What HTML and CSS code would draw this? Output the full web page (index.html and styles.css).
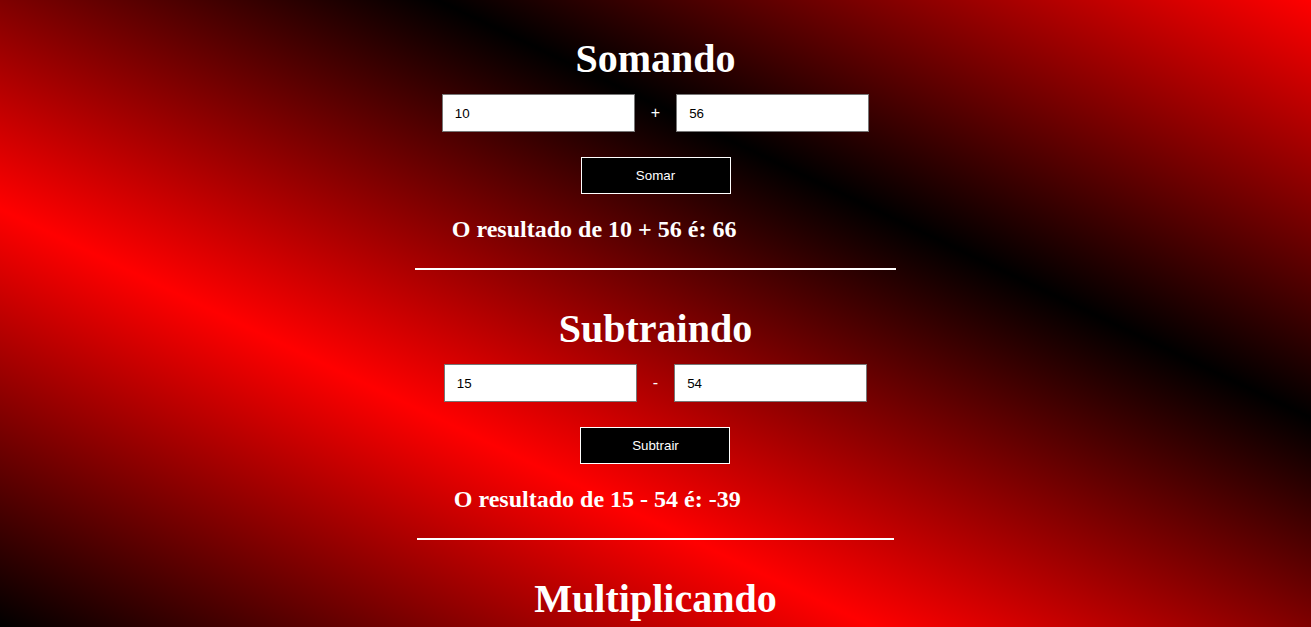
FILE: index.html
```html
<!DOCTYPE html>
<html lang="pt-BR">
<head>
<meta charset="utf-8">
<title>Calculadora</title>
<link rel="stylesheet" href="styles.css">
</head>
<body>
  <section class="calc">
    <h1 class="calc-title">Somando</h1>
    <div class="calc-row">
      <input class="calc-input" type="text" value="10">
      <span class="calc-op">+</span>
      <input class="calc-input" type="text" value="56">
    </div>
    <button class="calc-btn" type="button">Somar</button>
    <h2 class="calc-result">O resultado de 10 + 56 é: 66</h2>
    <hr class="calc-rule">
  </section>

  <section class="calc">
    <h1 class="calc-title">Subtraindo</h1>
    <div class="calc-row">
      <input class="calc-input" type="text" value="15">
      <span class="calc-op">-</span>
      <input class="calc-input" type="text" value="54">
    </div>
    <button class="calc-btn" type="button">Subtrair</button>
    <h2 class="calc-result">O resultado de 15 - 54 é: -39</h2>
    <hr class="calc-rule">
  </section>

  <section class="calc">
    <h1 class="calc-title">Multiplicando</h1>
    <div class="calc-row">
      <input class="calc-input" type="text">
      <span class="calc-op">*</span>
      <input class="calc-input" type="text">
    </div>
    <button class="calc-btn" type="button">Multiplicar</button>
    <hr class="calc-rule">
  </section>
</body>
</html>
```

FILE: styles.css
```css
html {
  margin: 0;
  padding: 0;
}

body {
  margin: 8px;
  font-family: "Liberation Serif", "Times New Roman", serif;
  color: #fff;
  background: linear-gradient(to top right, #000000, #ff0000, #000000, #ff0000) fixed;
}

.calc {
  width: fit-content;
  margin: 0 auto 8px;
  padding: 0 27px;
  display: flex;
  flex-direction: column;
  align-items: center;
}

.calc-title {
  margin: 28px 0 0;
  font-size: 40px;
  line-height: 46px;
  font-weight: bold;
  text-align: center;
}

.calc-row {
  display: flex;
  align-items: center;
  margin-top: 12px;
}

.calc-input {
  box-sizing: border-box;
  width: 193px;
  height: 38px;
  margin: 0;
  padding: 0 11px 0 12px;
  border: 1px solid #767676;
  border-radius: 0;
  background: #fff;
  color: #000;
  font-family: "Liberation Sans", Arial, sans-serif;
  font-size: 13.33px;
  outline: none;
}

.calc-op {
  margin: 0 16px;
  font-family: "Liberation Sans", Arial, sans-serif;
  font-size: 16px;
  color: #fff;
}

.calc-btn {
  box-sizing: border-box;
  width: 150px;
  height: 37px;
  margin-top: 25px;
  border: 1px solid #fff;
  border-radius: 0;
  background: #000;
  color: #fff;
  font-family: "Liberation Sans", Arial, sans-serif;
  font-size: 13.33px;
  cursor: pointer;
}

.calc-result {
  align-self: flex-start;
  margin: 21px 0 0 10px;
  font-size: 24px;
  line-height: 28px;
  font-weight: bold;
}

.calc-rule {
  align-self: stretch;
  margin: 25px -27px 0;
  height: 2px;
  border: none;
  background: #fff;
}
```
